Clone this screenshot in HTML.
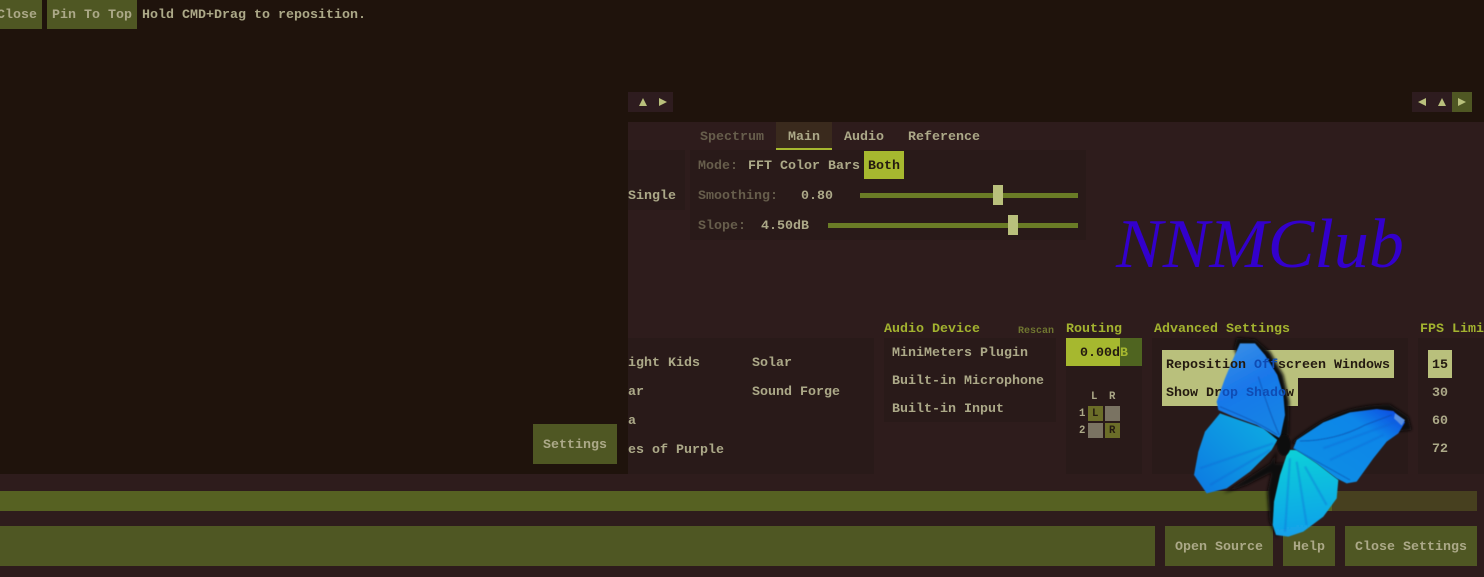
<!DOCTYPE html>
<html>
<head>
<meta charset="utf-8">
<style>
html,body{margin:0;padding:0;background:#2e1c1c;}
#r{position:relative;width:1484px;height:577px;overflow:hidden;background:#2e1c1c;font-family:"Liberation Mono",monospace;font-size:13.33px;font-weight:bold;color:#aca988;}
#r div{position:absolute;}
.t{white-space:pre;line-height:16px;height:16px;transform:translateY(1px);filter:blur(.3px);}
.d{color:#675e4c;}
.h{color:#a3b32f;}
.b{background:#4f5723;}
.p{background:#291a19;}
.c{color:#241a10;}
.u{color:#0f4cb4;}
</style>
</head>
<body>
<div id="r">
<!-- top dark strip -->
<div style="left:0;top:0;width:1484px;height:122px;background:#1f130c"></div>

<!-- nav arrows middle -->
<div style="left:628px;top:92px;width:45px;height:20px;background:#2e1c1f"></div>
<svg style="position:absolute;left:630px;top:92px" width="45" height="20"><path d="M9 14 L17 14 L13 6 Z" fill="#b9c07c"/><path d="M29 6 L37 10 L29 14 Z" fill="#b9c07c"/></svg>

<!-- nav arrows right -->
<div style="left:1412px;top:92px;width:60px;height:20px;background:#2e1c1f"></div>
<div style="left:1452px;top:92px;width:20px;height:20px;background:#4f5723"></div>
<svg style="position:absolute;left:1412px;top:92px" width="60" height="20"><path d="M6 10 L14 6 L14 14 Z" fill="#b9c07c"/><path d="M26 14 L34 14 L30 6 Z" fill="#b9c07c"/><path d="M46 6 L54 10 L46 14 Z" fill="#b9c07c"/></svg>

<!-- tabs -->
<div style="left:776px;top:122px;width:56px;height:28px;background:#3a2a1d"></div>
<div style="left:776px;top:148px;width:56px;height:2px;background:#a6b82f"></div>
<div class="t d" style="left:700px;top:129px">Spectrum</div>
<div class="t" style="left:788px;top:129px">Main</div>
<div class="t" style="left:844px;top:129px">Audio</div>
<div class="t" style="left:908px;top:129px">Reference</div>

<!-- panels upper -->
<div class="p" style="left:628px;top:150px;width:57px;height:60px"></div>
<div class="p" style="left:690px;top:150px;width:396px;height:90px"></div>
<div class="t" style="left:628px;top:188px">Single</div>
<div class="t d" style="left:698px;top:158px">Mode:</div>
<div class="t" style="left:748px;top:158px">FFT</div>
<div class="t" style="left:780px;top:158px">Color</div>
<div class="t" style="left:828px;top:158px">Bars</div>
<div style="left:864px;top:151px;width:40px;height:28px;background:#a6b82f"></div>
<div class="t c" style="left:868px;top:158px">Both</div>
<div class="t d" style="left:698px;top:188px">Smoothing:</div>
<div class="t" style="left:801px;top:188px">0.80</div>
<div style="left:860px;top:193px;width:218px;height:5px;background:#6a7c26"></div>
<div style="left:993px;top:185px;width:10px;height:20px;background:#b9c07c"></div>
<div class="t d" style="left:698px;top:218px">Slope:</div>
<div class="t" style="left:761px;top:218px">4.50dB</div>
<div style="left:828px;top:223px;width:250px;height:5px;background:#6a7c26"></div>
<div style="left:1008px;top:215px;width:10px;height:20px;background:#b9c07c"></div>

<!-- NNMClub -->
<div style="left:1116px;top:207px;font-family:'Liberation Serif',serif;font-style:italic;font-weight:normal;font-size:70px;line-height:76px;color:#3300cc;white-space:pre">NNMClub</div>

<!-- lower panels -->
<div class="p" style="left:628px;top:338px;width:246px;height:136px"></div>
<div class="t" style="left:628px;top:355px">ight Kids</div>
<div class="t" style="left:628px;top:384px">ar</div>
<div class="t" style="left:628px;top:413px">a</div>
<div class="t" style="left:628px;top:442px">es of Purple</div>
<div class="t" style="left:752px;top:355px">Solar</div>
<div class="t" style="left:752px;top:384px">Sound Forge</div>

<div class="t h" style="left:884px;top:321px">Audio Device</div>
<div class="t" style="left:1018px;top:323px;font-size:10px;color:#6f7530">Rescan</div>
<div class="p" style="left:884px;top:338px;width:172px;height:84px"></div>
<div class="t" style="left:892px;top:345px">MiniMeters Plugin</div>
<div class="t" style="left:892px;top:373px">Built-in Microphone</div>
<div class="t" style="left:892px;top:401px">Built-in Input</div>

<div class="t h" style="left:1066px;top:321px">Routing</div>
<div class="p" style="left:1066px;top:338px;width:76px;height:136px"></div>
<div style="left:1066px;top:338px;width:54px;height:28px;background:#a6b82f"></div>
<div style="left:1120px;top:338px;width:22px;height:28px;background:#4f6420"></div>
<div class="t c" style="left:1080px;top:345px">0.00d</div>
<div class="t" style="left:1120px;top:345px;color:#a6b82f">B</div>
<div class="t" style="left:1091px;top:388px;font-size:10.67px">L</div>
<div class="t" style="left:1109px;top:388px;font-size:10.67px">R</div>
<div class="t" style="left:1079px;top:405px;font-size:10.67px">1</div>
<div class="t" style="left:1079px;top:422px;font-size:10.67px">2</div>
<div style="left:1088px;top:406px;width:15px;height:15px;background:#6b6d28"></div>
<div style="left:1105px;top:406px;width:15px;height:15px;background:#7a7362"></div>
<div style="left:1088px;top:423px;width:15px;height:15px;background:#7a7362"></div>
<div style="left:1105px;top:423px;width:15px;height:15px;background:#6b6d28"></div>
<div class="t c" style="left:1092px;top:405px;font-size:10.67px">L</div>
<div class="t c" style="left:1109px;top:422px;font-size:10.67px">R</div>

<div class="t h" style="left:1154px;top:321px">Advanced Settings</div>
<div class="p" style="left:1152px;top:338px;width:256px;height:136px"></div>
<div style="left:1162px;top:350px;width:232px;height:28px;background:#b9c07c"></div>
<div style="left:1162px;top:378px;width:136px;height:28px;background:#b9c07c"></div>

<div class="t h" style="left:1420px;top:321px">FPS Limit</div>
<div class="p" style="left:1418px;top:338px;width:66px;height:136px"></div>
<div style="left:1428px;top:350px;width:24px;height:28px;background:#b9c07c"></div>
<div class="t c" style="left:1432px;top:357px">15</div>
<div class="t" style="left:1432px;top:385px">30</div>
<div class="t" style="left:1432px;top:413px">60</div>
<div class="t" style="left:1432px;top:441px">72</div>

<!-- bars -->
<div style="left:0;top:491px;width:1332px;height:20px;background:#566122"></div>
<div style="left:1332px;top:491px;width:145px;height:20px;background:#47401f"></div>
<div class="b" style="left:0;top:526px;width:1155px;height:40px"></div>
<div class="b" style="left:1165px;top:526px;width:108px;height:40px"></div>
<div class="b" style="left:1283px;top:526px;width:52px;height:40px"></div>
<div class="b" style="left:1345px;top:526px;width:132px;height:40px"></div>
<div class="t" style="left:1175px;top:539px">Open Source</div>
<div class="t" style="left:1293px;top:539px">Help</div>
<div class="t" style="left:1355px;top:539px">Close Settings</div>

<!-- floating window -->
<div style="left:0;top:0;width:628px;height:474px;background:#1f130c"></div>
<div class="b" style="left:0;top:0;width:42px;height:29px"></div>
<div class="b" style="left:47px;top:0;width:90px;height:29px"></div>
<div class="t" style="left:-3px;top:7px">Close</div>
<div class="t" style="left:52px;top:7px">Pin To Top</div>
<div class="t" style="left:142px;top:7px">Hold CMD+Drag to reposition.</div>
<div class="b" style="left:533px;top:424px;width:84px;height:40px"></div>
<div class="t" style="left:543px;top:437px">Settings</div>

<!-- butterfly -->
<svg style="position:absolute;left:1190px;top:335px" width="230" height="205" viewBox="0 0 690 615">
<defs>
<linearGradient id="g1" x1="0.2" y1="0" x2="0.6" y2="1"><stop offset="0" stop-color="#3a90e6"/><stop offset="0.45" stop-color="#1a78ea"/><stop offset="1" stop-color="#1484e4"/></linearGradient>
<linearGradient id="g2" x1="1" y1="0" x2="0" y2="1"><stop offset="0" stop-color="#10b0e2"/><stop offset="1" stop-color="#0f78e2"/></linearGradient>
<linearGradient id="g3" x1="0" y1="1" x2="1" y2="0"><stop offset="0" stop-color="#0e90e4"/><stop offset="0.7" stop-color="#0f86e8"/><stop offset="1" stop-color="#1040e0"/></linearGradient>
<linearGradient id="g4" x1="0.3" y1="0" x2="0.4" y2="1"><stop offset="0" stop-color="#10d0d8"/><stop offset="1" stop-color="#12a0ea"/></linearGradient>
<filter id="bl"><feGaussianBlur stdDeviation="1.5"/></filter>
<filter id="bv"><feGaussianBlur stdDeviation="2.5"/></filter>
<filter id="bs"><feGaussianBlur stdDeviation="5"/></filter>
</defs>
<g filter="url(#bs)" fill="#0b0808">
<path d="M132 40 L140 8 L195 12 L240 50 L280 120 L298 200 L296 300 L255 330 L200 200 Z"/>
<path d="M300 325 C400 240 480 208 600 208 L655 245 L665 285 L620 290 L400 320 Z"/>
<path d="M100 475 L240 385 L262 345 L250 410 L170 450 Z"/>
<path d="M250 385 L285 385 L262 610 L238 560 L232 470 Z"/>
</g>
<path d="M45 290 L90 235 L220 280 L262 315 L245 345 L180 410 L110 460 L50 475 L12 420 L25 350 Z" fill="url(#g2)" filter="url(#bl)"/>
<path d="M150 25 L195 25 L225 60 L262 120 L280 180 L285 240 L270 310 L200 270 L130 245 L85 225 L80 200 L105 130 L130 70 Z" fill="url(#g1)" filter="url(#bl)"/>
<path d="M320 315 L400 262 L480 232 L560 222 L610 228 L645 262 L625 295 L590 320 L550 370 L500 440 L470 445 L440 430 L380 385 L310 340 Z" fill="url(#g3)" filter="url(#bl)"/>
<path d="M295 345 L320 345 L380 385 L445 435 L440 490 L400 545 L340 590 L295 605 L258 600 L248 570 L252 500 L270 420 Z" fill="url(#g4)" filter="url(#bl)"/>
<path d="M615 235 L645 255 L635 272 L612 250 Z" fill="#5a90e0" filter="url(#bl)"/>
<g fill="none" stroke="#0a429e" stroke-width="3" opacity=".55" filter="url(#bl)">
<path d="M205 125 C225 190 245 250 268 300"/>
<path d="M90 215 C150 240 210 265 262 300"/>
<path d="M330 318 C400 318 470 300 525 270 L605 240"/>
<path d="M310 340 L480 435"/>
</g>
<g fill="none" stroke="#0c62d0" stroke-width="6" opacity=".35" filter="url(#bv)">
<path d="M250 325 L30 400"/><path d="M240 345 L60 450"/>
<path d="M300 370 L285 590"/><path d="M320 380 L350 570"/><path d="M345 395 L410 510"/>
<path d="M400 340 L620 260"/><path d="M420 375 L580 300"/>
</g>
<ellipse cx="282" cy="330" rx="20" ry="32" fill="#0c0808" filter="url(#bl)"/>
</svg>
<div class="t c" style="left:1166px;top:357px">Reposition <span class="u">Off</span>screen Windows</div>
<div class="t c" style="left:1166px;top:385px">Show Dr<span class="u">op Shado</span>w</div>
</div>
</body>
</html>
